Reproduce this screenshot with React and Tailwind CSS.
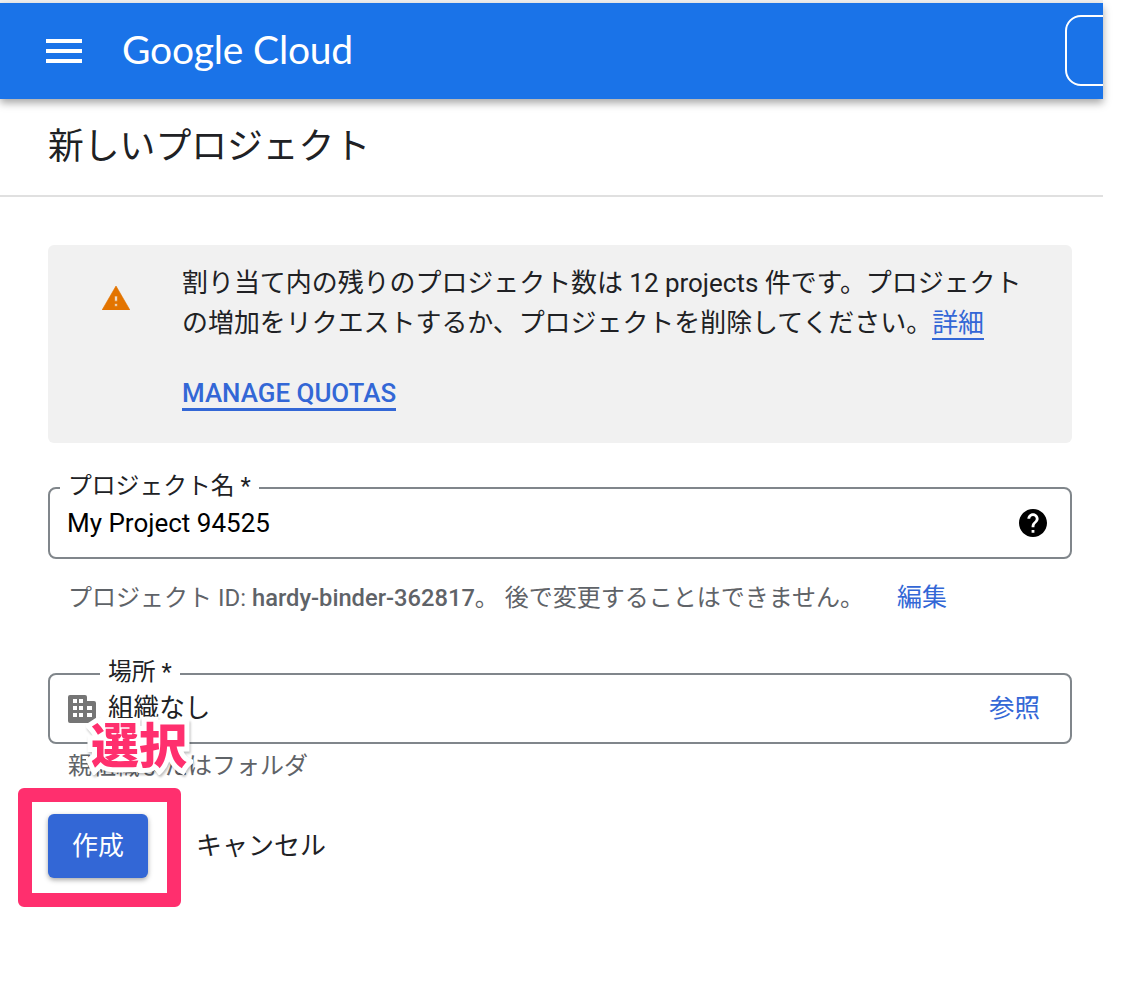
const CJK = "font-['Roboto','Noto_Sans_CJK_JP',sans-serif]"

function WarningIcon() {
  return (
    <svg viewBox="1 2 22 19" className="w-[28px] h-[24px] fill-[#e37400]">
      <path d="M1 21h22L12 2 1 21zm12-3h-2v-2h2v2zm0-4h-2v-4h2v4z" stroke="#e37400" strokeWidth="0.5" strokeLinejoin="round" />
    </svg>
  )
}

function HelpIcon() {
  return (
    <svg viewBox="2 2 20 20" className="w-7 h-7 fill-black">
      <path d="M12 2C6.48 2 2 6.48 2 12s4.48 10 10 10 10-4.48 10-10S17.52 2 12 2zm1 17h-2v-2h2v2zm2.07-7.75l-.9.92C13.45 12.9 13 13.5 13 15h-2v-.5c0-1.1.45-2.1 1.17-2.83l1.24-1.26c.37-.36.59-.86.59-1.41 0-1.1-.9-2-2-2s-2 .9-2 2H8c0-2.21 1.79-4 4-4s4 1.79 4 4c0 .88-.36 1.68-.93 2.25z" />
    </svg>
  )
}

function DomainIcon() {
  return (
    <svg viewBox="0 0 28 28" className="w-7 h-7 fill-[#757575]">
      <path
        fillRule="evenodd"
        d="M2 0H17a2 2 0 0 1 2 2V6H26a2 2 0 0 1 2 2V26a2 2 0 0 1-2 2H2a2 2 0 0 1-2-2V2a2 2 0 0 1 2-2z
           M5 4v4h4V4z M11 4v4h4V4z M5 11v4h4v-4z M11 11v4h4v-4z M5 18v4h4v-4z M11 18v4h4v-4z
           M19 11v4h5v-4z M19 18v4h5v-4z"
      />
    </svg>
  )
}

function Field({ label, labelClass, heightClass, children }) {
  return (
    <div className={`relative ${heightClass} border-2 border-[#80868b] rounded-lg flex items-center pl-[18px] pr-[23px]`}>
      {/* label sits on top of the outline */}
      <span className={`absolute -top-[19px] bg-white px-2 text-[23.8px] leading-[32px] text-[#202124] ${labelClass}`}>
        {label}
      </span>
      {children}
    </div>
  )
}

export default function App() {
  return (
    <div className={`relative w-[1144px] h-[1004px] bg-white overflow-hidden ${CJK}`}>
      <div className="w-[1103px] pt-[3px] bg-[#f1f1f1]">
        {/* Top bar */}
        <header className="relative z-10 h-24 bg-[#1a73e8] shadow-[0_4px_8px_rgba(0,0,0,0.35)] flex items-center overflow-hidden pl-[46px]">
          <div className="flex flex-col gap-[6px] w-9">
            <div className="h-1 bg-white"></div>
            <div className="h-1 bg-white"></div>
            <div className="h-1 bg-white"></div>
          </div>
          <div className="ml-[40px] font-['Lato',sans-serif] text-[39px] leading-none text-white tracking-[-0.2px] whitespace-nowrap -mt-1">
            Google Cloud
          </div>
          <div className="ml-auto -mr-1 w-[42px] h-[71px] border-2 border-white rounded-l-2xl -translate-y-[1px]"></div>
        </header>
      </div>

      <main className="w-[1103px] bg-white">
        {/* Title */}
        <div className="h-[98px] border-b-2 border-[#e0e0e0] pl-12 pt-[23px]">
          <h1 className="text-[35.8px] leading-[50px] text-[#202124] font-normal">新しいプロジェクト</h1>
        </div>

        <div className="pl-12 w-[1072px]">
          {/* Quota notice */}
          <div className="mt-[48px] h-[198px] bg-[#f1f1f1] rounded-md flex pt-[18px]">
            <div className="w-[134px] pl-[54px] pt-[23px] shrink-0">
              <WarningIcon />
            </div>
            <div className="w-[850px] text-[25.95px] leading-[40px] text-[#202124]">
              <p>
                割り当て内の残りのプロジェクト数は 12 projects 件です。プロジェクトの増加をリクエストするか、プロジェクトを削除してください。
                <a className="text-[#3367d6] border-b-2 border-[#3367d6]">詳細</a>
              </p>
              <a className="inline-block mt-[35px] font-medium text-[#3367d6] leading-[30px] border-b-[3px] border-[#3367d6]">
                MANAGE QUOTAS
              </a>
            </div>
          </div>

          {/* Project name */}
          <div className="mt-[44px]">
            <Field label="プロジェクト名 *" labelClass="left-[10px]" heightClass="h-[72px]">
              <span className="-ml-px text-[26px] text-black">My Project 94525</span>
              <span className="ml-auto"><HelpIcon /></span>
            </Field>
            <div className="mt-[21px] pl-5 flex items-center text-[24px] leading-[36px] text-[#5f6368]">
              <span>プロジェクト ID: <b className="font-medium text-[23.7px]">hardy-binder-362817</b>。 後で変更することはできません。</span>
              <a className="ml-auto mr-[125px] text-[25px] text-[#3367d6]">編集</a>
            </div>
          </div>

          {/* Location */}
          <div className="mt-[57px]">
            <Field label="場所 *" labelClass="left-[50px]" heightClass="h-[71px]">
              <DomainIcon />
              <span className="ml-3 text-[25.6px] text-[#202124]">組織なし</span>
              <a className="ml-auto mr-[7px] text-[25.5px] text-[#3367d6]">参照</a>
            </Field>
            <p className="mt-[4px] pl-5 text-[24px] leading-[36px] text-[#5f6368]">親組織またはフォルダ</p>
          </div>

          {/* Actions */}
          <div className="mt-[30px] flex items-center">
            <button className="w-[100px] h-16 bg-[#3367d6] rounded-md text-white text-[26px] shadow-[0_2px_5px_rgba(0,0,0,0.35)]">
              作成
            </button>
            <button className="ml-[48px] text-[26px] text-[#202124]">キャンセル</button>
          </div>
        </div>
      </main>

      {/* Annotation drawn over the page */}
      <div className="absolute left-[18px] top-[788px] w-[163px] h-[119px] border-[14px] border-[#ff2f6e] rounded-md"></div>
      <div className="absolute left-[91px] top-[712px] text-[48px] leading-[70px] font-black text-[#ff2f6e] [-webkit-text-stroke:10px_white] [paint-order:stroke_fill] whitespace-nowrap drop-shadow-[1px_2px_1px_rgba(0,0,0,0.25)]">
        選択
      </div>
    </div>
  )
}
